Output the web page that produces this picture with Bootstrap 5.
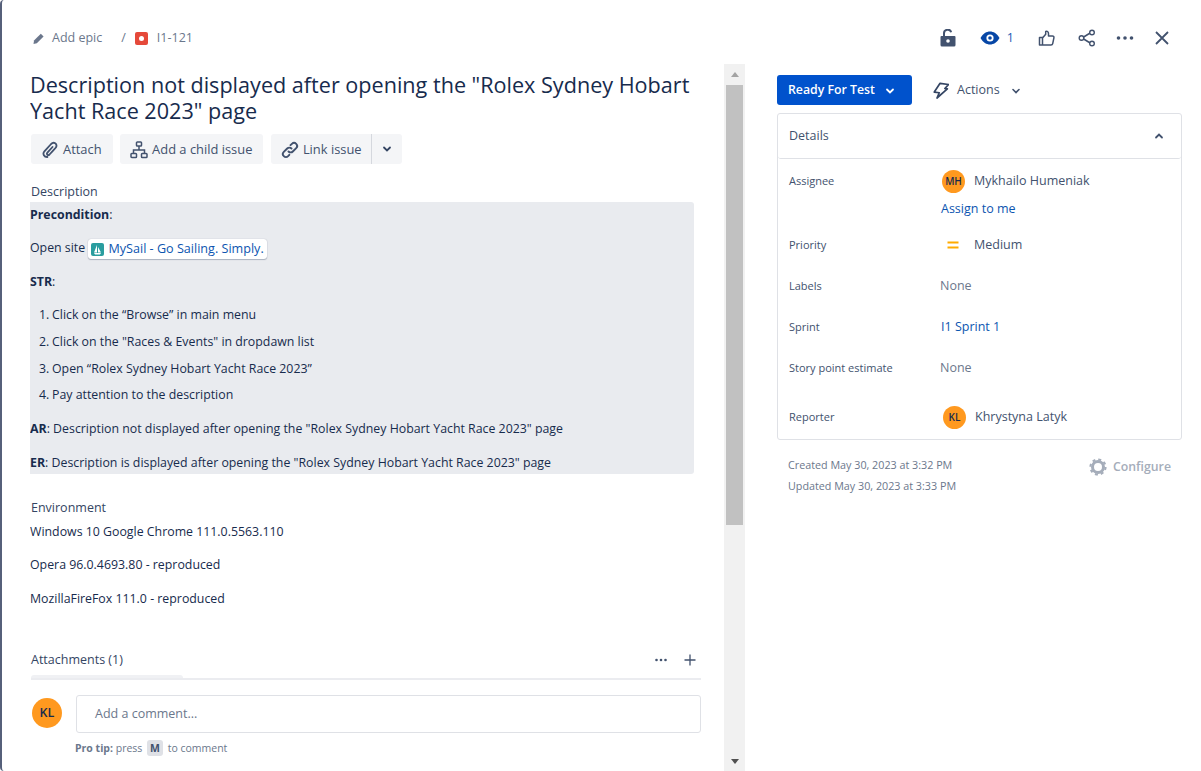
<!DOCTYPE html>
<html lang="en">
  <head>
    <meta charset="UTF-8" />
    <title>I1-121</title>
    <link href="https://cdn.jsdelivr.net/npm/bootstrap@5.3.0/dist/css/bootstrap.min.css" rel="stylesheet" />
    <style>
      html, body { height: 100%; overflow: hidden; }
      body { font-family: "Open Sans", "Noto Sans", sans-serif; font-size: 12.5px; color: #42526e; background: #fff; }
      a { color: #0c55b0; text-decoration: none; }
      .issue-shell { height: 771px; border-left: 2px solid #56607a; border-radius: 4px 0 0 4px; }
      .issue-top { height: 64px; padding: 12px 31px 0 30px; }
      .crumb { color: #6b778c; font-size: 12.5px; }
      .type-icon { width: 13px; height: 13px; background: #e5493a; border-radius: 2px; margin-left: 2px; }
      .type-icon::after { content: ""; display: block; width: 5px; height: 5px; margin: 4px; border-radius: 50%; background: #fff; }
      .left-pane { width: 743px; }
      .left-scroll { width: 722px; padding: 0 23px 0 28px; overflow: hidden; }
      .issue-title { font-size: 21.6px; line-height: 26px; font-weight: 500; color: #172b4d; margin: 8px 0 10px; }
      .act-row { margin-left: 1px; gap: 7.5px; }
      .act-btn { height: 30px; background: #f4f5f7; border-radius: 3px; color: #42526e; font-size: 12.9px; font-weight: 500; padding: 1px 11px 0 10px; }
      .act-join { border-radius: 3px 0 0 3px; padding-right: 9px; }
      .act-drop { border-radius: 0 3px 3px 0; border-left: 1px solid #d5d8de; padding: 0 9px; }
      .sec-label { font-size: 12.5px; font-weight: 500; color: #344563; margin-left: 1px; }
      .desc-block { background: #e9ebef; border-radius: 3px; margin: 0 7px 0 -7px; padding: 4px 7px 3px 7px; height: 272px; color: #172b4d; font-size: 12.35px; }
      .desc-block p { margin: 0 0 15px; height: 18.5px; line-height: 18.5px; white-space: nowrap; }
      .step-list { margin: 0 0 7px; padding-left: 9px; list-style: none; counter-reset: step; }
      .step-list li { height: 26.7px; line-height: 18.5px; counter-increment: step; }
      .step-list li::before { content: counter(step) "."; display: inline-block; width: 13px; }
      .smart-link { display: inline-flex; align-items: center; gap: 4px; background: #fff; border-radius: 3px; box-shadow: 0 1px 1px rgba(9,30,66,.25), 0 0 1px rgba(9,30,66,.31); padding: 0 3px; height: 20px; color: #0c55b0; font-size: 12.6px; vertical-align: middle; }
      .env-block { font-size: 12.35px; }
      .env-block p { margin: 0 0 15px; line-height: 18.5px; color: #172b4d; }
      .pseudo-scroll { width: 21px; background: #f1f1f1; }
      .pseudo-thumb { height: 440px; margin: 0 2px; background: #c1c1c1; }
      .tri-up { width: 0; height: 0; border: 4px solid transparent; border-top: 0; border-bottom: 5px solid #a3a3a3; margin: 8px auto 8px; }
      .tri-down { width: 0; height: 0; border: 4px solid transparent; border-bottom: 0; border-top: 5px solid #505050; margin: 0 auto 7px; }
      .attach-peek { width: 152px; height: 3px; background: #f0f1f4; border-radius: 3px 3px 0 0; margin-left: 1px; }
      .comment-zone { border-top: 2px solid #ebecf0; margin-left: 1px; padding-top: 15px; }
      .user-avatar { width: 30px; height: 30px; border-radius: 50%; background: #ff991f; color: #172b4d; font-size: 12.5px; font-weight: 600; }
      .user-avatar.tiny { width: 23px; height: 23px; font-size: 10px; }
      .comment-input { height: 38px; border: 1px solid #dfe1e6; border-radius: 3px; padding: 1px 18px 0; color: #6b778c; font-size: 12.5px; }
      .pro-tip { font-size: 10.5px; color: #6b778c; margin: 8px 0 0 -1px; }
      .key-m { background: #dfe1e6; border-radius: 3px; padding: 1px 3px; font-weight: 700; color: #42526e; margin: 0 2px; }
      .right-pane { width: 456px; padding: 0 19px 0 32px; }
      .status-btn { height: 30px; background: #0052cc; color: #fff; border-radius: 3px; font-weight: 600; font-size: 12.3px; padding: 1px 11px 0; width: 135px; }
      .actions-menu { margin: 1px 0 0 21px; }
      .details-box { border: 1px solid #dfe1e6; border-radius: 3px; margin-top: 8px; height: 327px; }
      .details-head { height: 45px; padding: 0 11px; border-bottom: 1px solid #dfe1e6; font-weight: 500; font-size: 12.5px; border-radius: 3px; }
      .field-row { padding-left: 11px; }
      .field-name { width: 152px; font-size: 11px; font-weight: 500; color: #42526e; flex: none; }
      .none-val { color: #6b778c; margin-left: -1px; }
      .meta-line { font-size: 10.75px; color: #6b778c; line-height: 21px; }
      .config-link { color: #a5adba; font-weight: 600; font-size: 12.3px; margin-top: 3px; }
    </style>
  </head>
  <body>
    <div class="issue-shell d-flex flex-column">
      <!-- top bar -->
      <div class="issue-top d-flex align-items-center">
        <div class="crumb d-flex align-items-center">
          <svg width="14" height="14" viewBox="0 0 14 14" style="margin-right:6px"><path d="M2 9.500 8.800 2.700l2.800 2.800-6.800 6.800-3.300.6z" fill="#6b778c" /></svg>
          <span>Add epic</span>
          <span style="margin:0 7px 0 19px">/</span>
          <span class="type-icon"></span>
          <span style="margin-left:9px">I1-121</span>
        </div>
        <div class="ms-auto d-flex align-items-center">
          <svg width="16" height="18" viewBox="0 0 16 18"><path d="M1.500 7h13a1 1 0 0 1 1 1v8a1.500 1.500 0 0 1-1.500 1.500H2A1.500 1.500 0 0 1 .5 16V8a1 1 0 0 1 1-1z" fill="#42526e" /><path d="M4 7V4.500a3.700 3.700 0 0 1 7.200-1.300" fill="none" stroke="#42526e" stroke-width="2" /><circle cx="8" cy="12" r="1.800" fill="#fff" /></svg>
          <svg width="20" height="14" viewBox="0 0 20 14" style="margin-left:24px"><path d="M0.500 7C3 2.500 6.500.5 10 .5S17 2.500 19.500 7C17 11.500 13.500 13.500 10 13.500S3 11.500.5 7z" fill="#0747a6" /><circle cx="10" cy="7" r="3.600" fill="#fff" /><circle cx="10" cy="7" r="1.800" fill="#0747a6" /></svg>
          <span style="color:#1d5bb5;margin-left:7px">1</span>
          <svg width="18" height="18" viewBox="0 0 18 18" style="margin-left:24px"><path d="M1.500 8.500h3v7.500h-3zM4.500 9l3.200-3.800V2.500c1.800-.6 2.800.6 2.800 2.200V7h4c1 0 1.600.8 1.400 1.800l-1.200 5.800c-.2.900-.8 1.400-1.700 1.400H4.500" fill="none" stroke="#42526e" stroke-width="1.500" stroke-linejoin="round" /></svg>
          <svg width="18" height="18" viewBox="0 0 18 18" style="margin-left:22px"><path d="M4 9l9-5.500M4 9l9 5.500" stroke="#42526e" stroke-width="1.500" /><circle cx="3.500" cy="9" r="2.300" fill="#fff" stroke="#42526e" stroke-width="1.400" /><circle cx="14" cy="3.500" r="2.300" fill="#fff" stroke="#42526e" stroke-width="1.400" /><circle cx="14" cy="14.500" r="2.300" fill="#fff" stroke="#42526e" stroke-width="1.400" /></svg>
          <svg width="18" height="18" viewBox="0 0 18 18" style="margin-left:20px"><circle cx="2.500" cy="9" r="1.800" fill="#42526e" /><circle cx="9" cy="9" r="1.800" fill="#42526e" /><circle cx="15.500" cy="9" r="1.800" fill="#42526e" /></svg>
          <svg width="16" height="16" viewBox="0 0 16 16" style="margin-left:20px"><path d="M2 2l12 12M14 2 2 14" stroke="#42526e" stroke-width="1.800" /></svg>
        </div>
      </div>

      <div class="d-flex flex-grow-1" style="min-height:0">
        <!-- left -->
        <div class="left-pane d-flex">
          <div class="left-scroll d-flex flex-column">
            <div class="flex-grow-1 overflow-hidden" style="min-height:0">
              <h1 class="issue-title">Description not displayed after opening the "Rolex Sydney Hobart Yacht Race 2023" page</h1>
              <div class="d-flex act-row">
                <div class="act-btn d-flex align-items-center gap-1">
                  <svg width="18" height="18" viewBox="0 0 18 18"><path d="M6.500 16c-3.300.3-5.300-3.200-3.100-5.700l6.700-7.300c2.700-2.700 6.500-.3 5 3.100-.3.700-6.600 7.400-6.600 7.400-1.500 1.500-3.400-.2-2.100-1.900L11.500 6" fill="none" stroke="#42526e" stroke-width="1.800" stroke-linecap="round" /></svg>
                  <span>Attach</span>
                </div>
                <div class="act-btn d-flex align-items-center gap-1">
                  <svg width="18" height="18" viewBox="0 0 18 18" fill="none" stroke="#42526e" stroke-width="1.500"><rect x="6.500" y="1" width="5" height="4" rx=".8" /><rect x="1" y="12.500" width="5.500" height="4" rx=".8" /><rect x="11.500" y="12.500" width="5.500" height="4" rx=".8" /><path d="M9 5v4M3.500 12.500V9h11v3.500" /></svg>
                  <span>Add a child issue</span>
                </div>
                <div class="d-flex">
                  <div class="act-btn act-join d-flex align-items-center gap-1">
                    <svg width="18" height="18" viewBox="0 0 18 18" fill="none" stroke="#42526e" stroke-width="1.900" stroke-linecap="round"><path d="M7.500 10.500a3 3 0 0 0 4.300 0l3.400-3.400a3 3 0 0 0-4.300-4.300L9.500 4.200" /><path d="M10.500 7.500a3 3 0 0 0-4.300 0l-3.400 3.400a3 3 0 0 0 4.300 4.300l1.200-1.400" /></svg>
                    <span>Link issue</span>
                  </div>
                  <div class="act-btn act-drop d-flex align-items-center">
                    <svg width="12" height="12" viewBox="0 0 12 12"><path d="M3 4.500 6 7.500l3-3" fill="none" stroke="#344563" stroke-width="1.800" stroke-linecap="round" /></svg>
                  </div>
                </div>
              </div>
              <div class="sec-label" style="margin-top:19px">Description</div>
              <div class="desc-block">
                <p><strong>Precondition</strong>:</p>
                <p>Open site <span class="smart-link"><svg width="13" height="13" viewBox="0 0 13 13"><rect width="13" height="13" rx="2" fill="#2a9d9f" /><path d="M6 2v7.500H3zM7 4l3 5.500H7zM3 10h7l-1 1.500H4z" fill="#fff" /></svg>MySail - Go Sailing. Simply.</span></p>
                <p><strong>STR</strong>:</p>
                <ol class="step-list">
                  <li>Click on the “Browse” in main menu</li>
                  <li>Click on the "Races &amp; Events" in dropdawn list</li>
                  <li>Open “Rolex Sydney Hobart Yacht Race 2023”</li>
                  <li>Pay attention to the description</li>
                </ol>
                <p><strong>AR</strong>: Description not displayed after opening the "Rolex Sydney Hobart Yacht Race 2023" page</p>
                <p class="mb-0"><strong>ER</strong>: Description is displayed after opening the "Rolex Sydney Hobart Yacht Race 2023" page</p>
              </div>
              <div class="sec-label" style="margin-top:25px">Environment</div>
              <div class="env-block" style="margin-top:5px">
                <p>Windows 10 Google Chrome 111.0.5563.110</p>
                <p>Opera 96.0.4693.80 - reproduced</p>
                <p>MozillaFireFox 111.0 - reproduced</p>
              </div>
              <div class="d-flex align-items-center sec-label" style="margin-top:43px">
                <span>Attachments (1)</span>
                <span class="ms-auto d-flex align-items-center" style="gap:15px;margin-right:4px">
                  <svg width="14" height="14" viewBox="0 0 14 14"><circle cx="2.500" cy="7" r="1.300" fill="#42526e" /><circle cx="7" cy="7" r="1.300" fill="#42526e" /><circle cx="11.500" cy="7" r="1.300" fill="#42526e" /></svg>
                  <svg width="14" height="14" viewBox="0 0 14 14"><path d="M7 1.500v11M1.500 7h11" stroke="#42526e" stroke-width="1.300" /></svg>
                </span>
              </div>
            </div>
            <div class="attach-peek"></div>
            <div class="comment-zone">
              <div class="d-flex gap-3">
                <div class="user-avatar d-flex align-items-center justify-content-center flex-shrink-0" style="margin-top:3px;margin-left:1px">KL</div>
                <div class="flex-grow-1" style="margin-left:-2px">
                  <div class="comment-input d-flex align-items-center">Add a comment...</div>
                  <div class="pro-tip"><strong>Pro tip:</strong> press <span class="key-m">M</span> to comment</div>
                </div>
              </div>
              <div style="height:14px"></div>
            </div>
          </div>
          <div class="pseudo-scroll d-flex flex-column">
            <div class="tri-up"></div>
            <div class="pseudo-thumb"></div>
            <div class="tri-down mt-auto"></div>
          </div>
        </div>

        <!-- right -->
        <div class="right-pane">
          <div class="d-flex align-items-center" style="margin-top:11px">
            <div class="status-btn d-flex align-items-center justify-content-between">
              <span>Ready For Test</span>
              <svg width="12" height="12" viewBox="0 0 12 12" style="margin-right:5px"><path d="M3 4.500 6 7.500l3-3" fill="none" stroke="#fff" stroke-width="1.800" stroke-linecap="round" /></svg>
            </div>
            <div class="actions-menu d-flex align-items-center">
              <svg width="16" height="18" viewBox="0 0 16 18" fill="none" stroke="#344563" stroke-width="1.700" stroke-linejoin="round"><path d="M6 1.500h8.500L11.500 6H14L5 16.500 6.500 11H1.500z" transform="rotate(8 8 9)" /></svg>
              <span style="margin-left:8px;font-weight:500">Actions</span>
              <svg width="12" height="12" viewBox="0 0 12 12" style="margin-left:10px"><path d="M3 4.500 6 7.500l3-3" fill="none" stroke="#42526e" stroke-width="1.600" stroke-linecap="round" /></svg>
            </div>
          </div>
          <div class="details-box">
            <div class="details-head d-flex align-items-center justify-content-between">
              <span>Details</span>
              <svg width="12" height="12" viewBox="0 0 12 12" style="margin-right:5px"><path d="M3 7.500 6 4.500l3 3" fill="none" stroke="#42526e" stroke-width="1.800" stroke-linecap="round" /></svg>
            </div>
            <div class="field-row d-flex" style="margin-top:11px">
              <div class="field-name" style="padding-top:3px">Assignee</div>
              <div>
                <div class="d-flex align-items-center">
                  <div class="user-avatar tiny d-flex align-items-center justify-content-center" style="margin-left:1px">MH</div>
                  <span style="margin-left:9px">Mykhailo Humeniak</span>
                </div>
                <a href="#" class="d-block" style="margin-top:7px">Assign to me</a>
              </div>
            </div>
            <div class="field-row d-flex align-items-center" style="margin-top:17px">
              <div class="field-name">Priority</div>
              <svg width="14" height="12" viewBox="0 0 14 12" style="margin-left:5px"><path d="M1.500 3.500h11M1.500 8.500h11" stroke="#ffab00" stroke-width="2" /></svg>
              <span style="margin-left:14px">Medium</span>
            </div>
            <div class="field-row d-flex align-items-center" style="margin-top:22px">
              <div class="field-name">Labels</div><span class="none-val">None</span>
            </div>
            <div class="field-row d-flex align-items-center" style="margin-top:23px">
              <div class="field-name">Sprint</div><a href="#">I1 Sprint 1</a>
            </div>
            <div class="field-row d-flex align-items-center" style="margin-top:22px">
              <div class="field-name">Story point estimate</div><span class="none-val">None</span>
            </div>
            <div class="field-row d-flex align-items-center" style="margin-top:28px">
              <div class="field-name">Reporter</div>
              <div class="user-avatar tiny d-flex align-items-center justify-content-center" style="margin-left:2px">KL</div>
              <span style="margin-left:9px">Khrystyna Latyk</span>
            </div>
          </div>
          <div class="d-flex justify-content-between" style="margin-top:15px;padding:0 11px 0 11px">
            <div class="meta-line">Created May 30, 2023 at 3:32 PM<br />Updated May 30, 2023 at 3:33 PM</div>
            <div class="config-link d-flex align-items-center align-self-start" style="gap:6px">
              <svg width="18" height="18" viewBox="0 0 18 18"><circle cx="9" cy="9" r="5.500" fill="none" stroke="#a5adba" stroke-width="3" /><circle cx="9" cy="9" r="7.600" fill="none" stroke="#a5adba" stroke-width="2" stroke-dasharray="3 2.970" /></svg>
              <span>Configure</span>
            </div>
          </div>
        </div>
      </div>
    </div>
    <script src="https://cdn.jsdelivr.net/npm/bootstrap@5.3.0/dist/js/bootstrap.bundle.min.js"></script>
  </body>
</html>
